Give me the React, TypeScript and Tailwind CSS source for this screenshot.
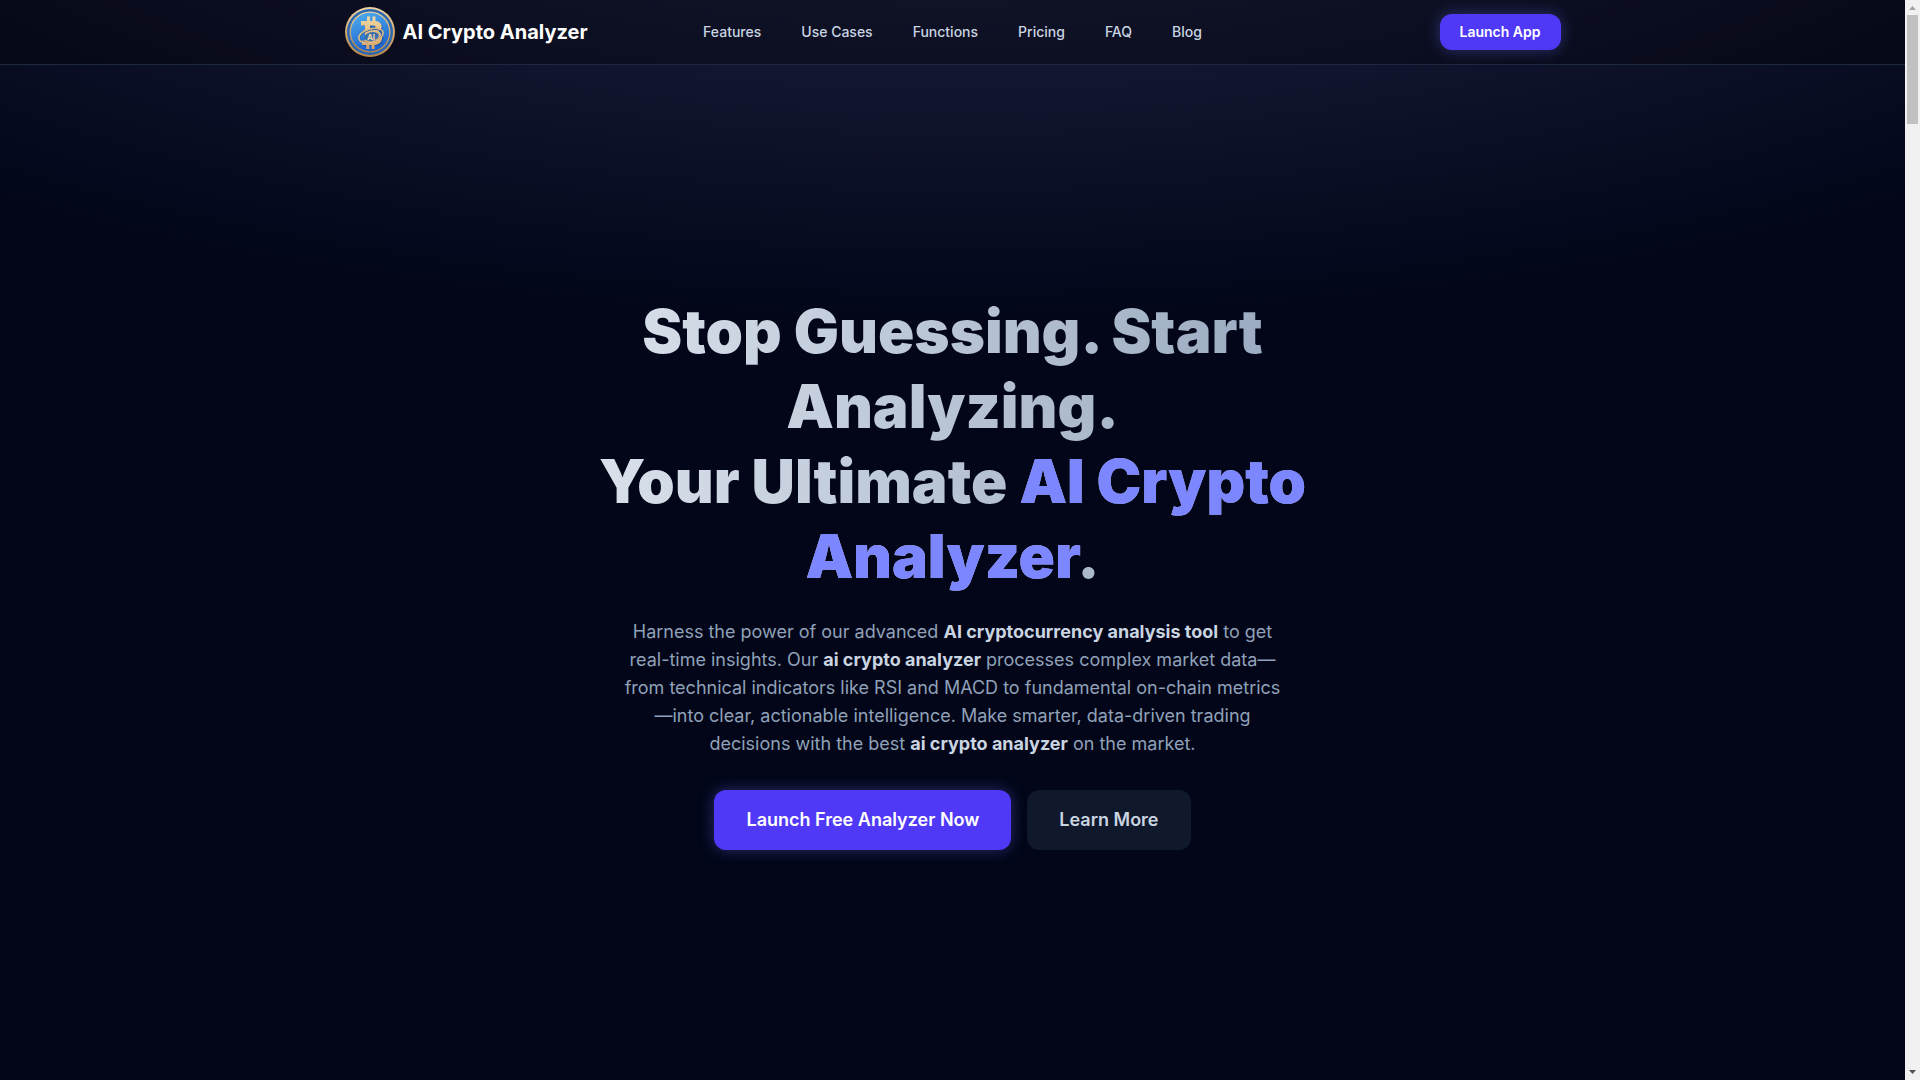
const navLinks = [
  { label: "Features", href: "#features" },
  { label: "Use Cases", href: "#use-cases" },
  { label: "Functions", href: "#functions" },
  { label: "Pricing", href: "#pricing" },
  { label: "FAQ", href: "#faq" },
  { label: "Blog", href: "#blog" },
]

const CoinLogo = () => {
  return (
    <svg className="size-[50px] shrink-0" viewBox="0 0 50 50" fill="none" aria-hidden="true">
      <defs>
        <linearGradient id="gold" x1="0" y1="0" x2="0" y2="1">
          <stop offset="0" stopColor="#efd5a4" />
          <stop offset="0.5" stopColor="#d3a970" />
          <stop offset="1" stopColor="#b98449" />
        </linearGradient>
        <linearGradient id="sign" gradientUnits="userSpaceOnUse" x1="0" y1="9" x2="0" y2="42">
          <stop offset="0" stopColor="#f2d8a4" />
          <stop offset="1" stopColor="#d5a365" />
        </linearGradient>
        <linearGradient id="face" x1="0.3" y1="0" x2="0.6" y2="1">
          <stop offset="0" stopColor="#4ba9ec" />
          <stop offset="1" stopColor="#1c5fcb" />
        </linearGradient>
      </defs>
      <circle cx="25" cy="25" r="25" fill="url(#gold)" />
      <circle cx="25" cy="25" r="23" fill="#2b68b0" />
      <circle cx="25" cy="25" r="20.5" fill="url(#gold)" />
      <circle cx="25" cy="25" r="19.2" fill="url(#face)" />
      <path
        d="M17 15h13c8.500 0 9.500 7 4.800 10 6 3 4 14-4.300 14H18v-4h3V19h-4z"
        fill="#0f3f86"
        opacity="0.5"
      />
      <path d="M23.500 9.500v6M29 9.500v6M22.800 36v6M28 36v6" stroke="url(#sign)" strokeWidth="3" />
      <path
        d="M16 14h13.500c8.500 0 9 8 4 10.500 6 3.500 4.500 13.500-4.500 13.500H17v-4.500h3V18.500h-4zM25 18.500v3.500h3.500c2.800 0 2.800-3.500 0-3.500z"
        fill="url(#sign)"
        fillRule="evenodd"
      />
      <ellipse cx="26.500" cy="29.500" rx="7.500" ry="4.300" fill="#3a6fae" transform="rotate(-12 26.500 29.500)" />
      <ellipse cx="26" cy="29" rx="11.500" ry="6" stroke="#3d669b" strokeWidth="1" transform="rotate(-16 26 29)" />
      <ellipse cx="26" cy="28.500" rx="12.500" ry="6.800" stroke="#e3bb7d" strokeWidth="1.400" transform="rotate(-16 26 28.500)" />
      <text x="26" y="32.500" textAnchor="middle" fontFamily="Inter, sans-serif" fontSize="8" fontWeight="700" fill="#f2d8a4">
        AI
      </text>
    </svg>
  )
}

const Header = () => {
  return (
    <header className="absolute inset-x-0 top-0 z-10 border-b border-slate-800 bg-black/30">
      <div className="mx-auto flex h-16 max-w-7xl items-center px-8">
        <div className="flex flex-1 justify-start">
          <a href="#home" className="flex items-center gap-2 text-xl font-bold text-white">
            <CoinLogo />
            AI Crypto Analyzer
          </a>
        </div>
        <nav className="flex items-center gap-10">
          {navLinks.map((link) => (
            <a key={link.label} href={link.href} className="text-sm font-medium text-slate-300">
              {link.label}
            </a>
          ))}
        </nav>
        <div className="flex flex-1 justify-end">
          <a
            href="#app"
            className="rounded-xl bg-indigo-600 px-5 py-2 text-sm font-semibold text-white shadow-[0_0_15px_rgba(99,102,241,0.4)]"
          >
            Launch App
          </a>
        </div>
      </div>
    </header>
  )
}

const Hero = () => {
  return (
    <section className="flex min-h-screen flex-col items-center justify-center bg-[radial-gradient(ellipse_80%_50%_at_50%_-20%,rgba(120,119,198,0.3),rgba(120,119,198,0))] px-8 pt-16 text-center">
      <h1 className="max-w-4xl bg-linear-to-r from-slate-200 to-slate-400 bg-clip-text text-6xl leading-tight font-black text-transparent">
        Stop Guessing. Start Analyzing.
        <br />
        Your Ultimate <span className="text-indigo-400">AI Crypto Analyzer</span>.
      </h1>
      <p className="mt-6 max-w-2xl text-lg text-slate-400">
        Harness the power of our advanced <strong className="text-slate-300">AI cryptocurrency analysis tool</strong> to get
        real-time insights. Our <strong className="text-slate-300">ai crypto analyzer</strong> processes complex market
        data—from technical indicators like RSI and MACD to fundamental on-chain metrics—into clear, actionable
        intelligence. Make smarter, data-driven trading decisions with the best{" "}
        <strong className="text-slate-300">ai crypto analyzer</strong> on the market.
      </p>
      <div className="mt-8 flex gap-4">
        <a
          href="#app"
          className="rounded-xl bg-indigo-600 px-8 py-4 text-lg font-semibold text-white shadow-[0_0_15px_rgba(99,102,241,0.4)]"
        >
          Launch Free Analyzer Now
        </a>
        <a href="#features" className="rounded-xl bg-slate-800/50 px-8 py-4 text-lg font-semibold text-slate-300">
          Learn More
        </a>
      </div>
    </section>
  )
}

const ScrollRail = () => {
  return (
    <div className="flex w-[15px] shrink-0 flex-col items-center justify-between bg-[#f1f1f1]" aria-hidden="true">
      <div className="flex flex-col items-center">
        <svg className="size-[15px]" viewBox="0 0 15 15">
          <path d="M4 10h7L7.500 6z" fill="#a3a3a3" />
        </svg>
        <div className="h-[109px] w-[11px] bg-[#c1c1c1]" />
      </div>
      <svg className="size-[15px]" viewBox="0 0 15 15">
        <path d="M4 5h7L7.500 9z" fill="#505050" />
      </svg>
    </div>
  )
}

const App = () => {
  return (
    <div className="flex min-h-screen bg-slate-950 font-[Inter,sans-serif]">
      <main className="relative flex-1">
        <Header />
        <Hero />
      </main>
      <ScrollRail />
    </div>
  )
}

export default App
